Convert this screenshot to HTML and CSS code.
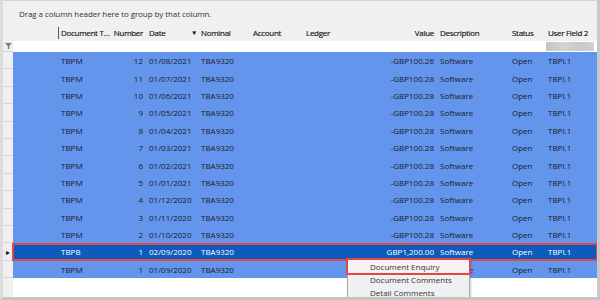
FILE: index.html
```html
<!DOCTYPE html>
<html lang="en">
<head>
  <meta charset="UTF-8" />
  <title>Transactions Grid</title>
  <link rel="stylesheet" href="styles.css">
</head>
<body>
  <div class="window">
    <div class="group-panel">Drag a column header here to group by that column.</div>

    <div class="grid">
      <div class="row header-row">
        <div class="ind"></div>
        <div class="cell"></div>
        <div class="cell"><span class="drag-bar"></span>Document T…</div>
        <div class="cell right">Number</div>
        <div class="cell">Date<span class="sort">&#9660;</span></div>
        <div class="cell">Nominal</div>
        <div class="cell">Account</div>
        <div class="cell">Ledger</div>
        <div class="cell right">Value</div>
        <div class="cell">Description</div>
        <div class="cell">Status</div>
        <div class="cell">User Field 2</div>
      </div>

      <div class="row filter-row">
        <div class="ind">
          <svg class="filter-icon" width="7" height="6" viewBox="0 0 7 6"><path d="M0 0h7L4.2 3v3H2.8V3z" fill="#7a7a7a"/></svg>
        </div>
        <div class="cell"></div><div class="cell"></div><div class="cell"></div><div class="cell"></div>
        <div class="cell"></div><div class="cell"></div><div class="cell"></div><div class="cell"></div>
        <div class="cell"></div><div class="cell"></div>
        <div class="cell"><span class="filter-blur"></span></div>
      </div>

      <div class="row data-row">
        <div class="ind"></div><div class="cell"></div>
        <div class="cell">TBPM</div><div class="cell right">12</div><div class="cell">01/08/2021</div>
        <div class="cell">TBA9320</div><div class="cell"></div><div class="cell"></div>
        <div class="cell right">-GBP100.26</div><div class="cell">Software</div><div class="cell">Open</div><div class="cell">TBPI.1</div>
      </div>
      <div class="row data-row">
        <div class="ind"></div><div class="cell"></div>
        <div class="cell">TBPM</div><div class="cell right">11</div><div class="cell">01/07/2021</div>
        <div class="cell">TBA9320</div><div class="cell"></div><div class="cell"></div>
        <div class="cell right">-GBP100.28</div><div class="cell">Software</div><div class="cell">Open</div><div class="cell">TBPI.1</div>
      </div>
      <div class="row data-row">
        <div class="ind"></div><div class="cell"></div>
        <div class="cell">TBPM</div><div class="cell right">10</div><div class="cell">01/06/2021</div>
        <div class="cell">TBA9320</div><div class="cell"></div><div class="cell"></div>
        <div class="cell right">-GBP100.28</div><div class="cell">Software</div><div class="cell">Open</div><div class="cell">TBPI.1</div>
      </div>
      <div class="row data-row">
        <div class="ind"></div><div class="cell"></div>
        <div class="cell">TBPM</div><div class="cell right">9</div><div class="cell">01/05/2021</div>
        <div class="cell">TBA9320</div><div class="cell"></div><div class="cell"></div>
        <div class="cell right">-GBP100.28</div><div class="cell">Software</div><div class="cell">Open</div><div class="cell">TBPI.1</div>
      </div>
      <div class="row data-row">
        <div class="ind"></div><div class="cell"></div>
        <div class="cell">TBPM</div><div class="cell right">8</div><div class="cell">01/04/2021</div>
        <div class="cell">TBA9320</div><div class="cell"></div><div class="cell"></div>
        <div class="cell right">-GBP100.28</div><div class="cell">Software</div><div class="cell">Open</div><div class="cell">TBPI.1</div>
      </div>
      <div class="row data-row">
        <div class="ind"></div><div class="cell"></div>
        <div class="cell">TBPM</div><div class="cell right">7</div><div class="cell">01/03/2021</div>
        <div class="cell">TBA9320</div><div class="cell"></div><div class="cell"></div>
        <div class="cell right">-GBP100.28</div><div class="cell">Software</div><div class="cell">Open</div><div class="cell">TBPI.1</div>
      </div>
      <div class="row data-row">
        <div class="ind"></div><div class="cell"></div>
        <div class="cell">TBPM</div><div class="cell right">6</div><div class="cell">01/02/2021</div>
        <div class="cell">TBA9320</div><div class="cell"></div><div class="cell"></div>
        <div class="cell right">-GBP100.28</div><div class="cell">Software</div><div class="cell">Open</div><div class="cell">TBPI.1</div>
      </div>
      <div class="row data-row">
        <div class="ind"></div><div class="cell"></div>
        <div class="cell">TBPM</div><div class="cell right">5</div><div class="cell">01/01/2021</div>
        <div class="cell">TBA9320</div><div class="cell"></div><div class="cell"></div>
        <div class="cell right">-GBP100.28</div><div class="cell">Software</div><div class="cell">Open</div><div class="cell">TBPI.1</div>
      </div>
      <div class="row data-row">
        <div class="ind"></div><div class="cell"></div>
        <div class="cell">TBPM</div><div class="cell right">4</div><div class="cell">01/12/2020</div>
        <div class="cell">TBA9320</div><div class="cell"></div><div class="cell"></div>
        <div class="cell right">-GBP100.28</div><div class="cell">Software</div><div class="cell">Open</div><div class="cell">TBPI.1</div>
      </div>
      <div class="row data-row">
        <div class="ind"></div><div class="cell"></div>
        <div class="cell">TBPM</div><div class="cell right">3</div><div class="cell">01/11/2020</div>
        <div class="cell">TBA9320</div><div class="cell"></div><div class="cell"></div>
        <div class="cell right">-GBP100.28</div><div class="cell">Software</div><div class="cell">Open</div><div class="cell">TBPI.1</div>
      </div>
      <div class="row data-row">
        <div class="ind"></div><div class="cell"></div>
        <div class="cell">TBPM</div><div class="cell right">2</div><div class="cell">01/10/2020</div>
        <div class="cell">TBA9320</div><div class="cell"></div><div class="cell"></div>
        <div class="cell right">-GBP100.28</div><div class="cell">Software</div><div class="cell">Open</div><div class="cell">TBPI.1</div>
      </div>
      <div class="row data-row selected">
        <div class="ind"><span class="arrow">&#9656;</span></div><div class="cell"></div>
        <div class="cell">TBPB</div><div class="cell right">1</div><div class="cell">02/09/2020</div>
        <div class="cell">TBA9320</div><div class="cell"></div><div class="cell"></div>
        <div class="cell right">GBP1,200.00</div><div class="cell">Software</div><div class="cell">Open</div><div class="cell">TBPI.1</div>
      </div>
      <div class="row data-row">
        <div class="ind"></div><div class="cell"></div>
        <div class="cell">TBPM</div><div class="cell right">1</div><div class="cell">01/09/2020</div>
        <div class="cell">TBA9320</div><div class="cell"></div><div class="cell"></div>
        <div class="cell right"></div><div class="cell">Software</div><div class="cell">Open</div><div class="cell">TBPI.1</div>
      </div>

      <div class="row empty-row">
        <div class="ind"></div>
      </div>
    </div>

    <div class="context-menu">
      <div class="menu-item active">Document Enquiry</div>
      <div class="menu-item">Document Comments</div>
      <div class="menu-item">Detail Comments</div>
    </div>
  </div>
</body>
</html>
```

FILE: styles.css
```css
body {
  margin: 0;
  background: #fff;
  font-family: 'Open Sans', sans-serif;
  font-size: 8px;
  color: #222;
}
.window {
  position: relative;
  width: 600px;
  height: 300px;
  box-sizing: border-box;
  background: #f0f0f0;
  border: 1px solid #d4d4d4;
  border-left: 3px solid #dcdcdc;
  border-right: 3px solid #c8c8c8;
  border-bottom: 3px solid #c4c4c4;
  overflow: hidden;
  display: flex;
  flex-direction: column;
}
.group-panel {
  height: 23px;
  padding-left: 16px;
  display: flex;
  align-items: center;
  padding-top: 1px;
  box-sizing: border-box;
  color: #333;
  letter-spacing: -0.08px;
}
.grid {
  flex: 1;
  display: flex;
  flex-direction: column;
}
.row {
  display: grid;
  grid-template-columns: 10px 45px 56px 32px 52px 52px 53px 77px 57px 72px 36px 52px;
  align-items: stretch;
}
.cell {
  display: flex;
  align-items: center;
  padding: 0 3px;
  white-space: nowrap;
  overflow: hidden;
  box-sizing: border-box;
}
.cell.right {
  justify-content: flex-end;
}
.ind {
  background: #f0f0f0;
  border-bottom: 1px solid #d6d6d6;
  box-sizing: border-box;
  display: flex;
  align-items: center;
  justify-content: center;
}
.header-row {
  height: 17px;
  color: #111;
  -webkit-text-stroke: 0.15px #111;
  letter-spacing: -0.3px;
}
.header-row .ind {
  border-bottom: none;
}
.header-row .cell {
  overflow: visible;
}
.drag-bar {
  width: 1px;
  height: 12px;
  background: #555;
  margin-left: -3px;
  margin-right: 2px;
}
.sort {
  font-size: 6px;
  margin-left: auto;
  margin-right: -2px;
  color: #111;
}
.filter-row {
  height: 11px;
  background: #fff;
}
.filter-icon {
  display: block;
}
.filter-blur {
  display: block;
  width: 49px;
  height: 9px;
  background: linear-gradient(90deg, #c4c4c4, #d4d4d4 40%, #c8c8c8 70%, #d2d2d2);
  margin-left: -2px;
}
.data-row {
  height: 17.4px;
  background: #6495ed;
  color: #1b1b1b;
}
.data-row.selected {
  background: #0b5cbc;
  color: #fff;
}
.data-row.selected .cell {
  border-top: 2px solid #e64545;
  border-bottom: 2px solid #e64545;
}
.data-row.selected .ind + .cell {
  border-left: 2px solid #e64545;
  margin-left: -1px;
}
.data-row.selected .cell:last-child {
  border-right: 2px solid #e64545;
  margin-right: -1px;
}
.arrow {
  font-size: 8px;
  color: #111;
}
.empty-row {
  flex: 1;
  background: #fff;
}
.empty-row .ind {
  border-bottom: none;
}
.context-menu {
  position: absolute;
  left: 344px;
  top: 258px;
  width: 121px;
  height: 50px;
  background: #f0f0f0;
  border: 1px solid #a8a8a8;
  box-shadow: 1px 1px 2px rgba(0,0,0,0.2);
}
.menu-item {
  height: 13px;
  line-height: 13px;
  padding-left: 22px;
  color: #333;
}
.menu-item.active {
  outline: 2px solid #e64545;
  outline-offset: 0;
  background: #f4f4f4;
}
```
